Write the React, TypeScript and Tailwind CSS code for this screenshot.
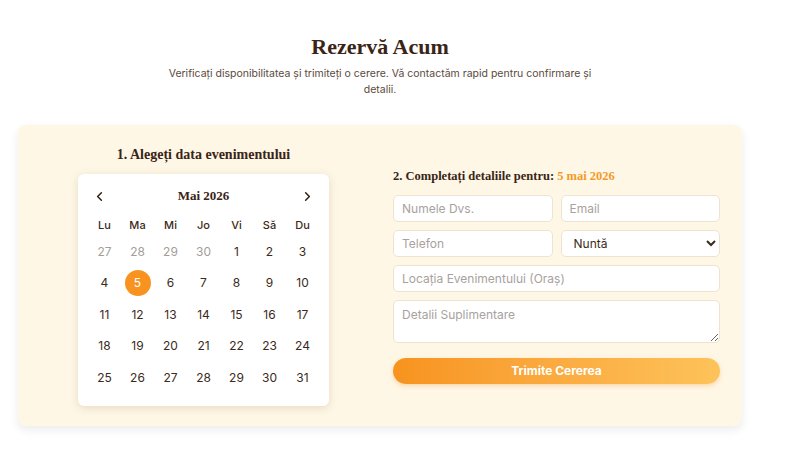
import React, { useState } from "react";
import { ChevronLeft, ChevronRight } from "lucide-react";

const weekDays = ["Lu", "Ma", "Mi", "Jo", "Vi", "Să", "Du"];

type Day = { n: number; muted: boolean };

const buildDays = (): Day[] => {
  const days: Day[] = [27, 28, 29, 30].map((n) => ({ n, muted: true }));
  for (let i = 1; i <= 31; i++) days.push({ n: i, muted: false });
  return days;
};

const serif = "font-['Liberation_Serif','DejaVu_Serif',serif]";

const Calendar: React.FC<{ selected: number; onSelect: (d: number) => void }> = ({
  selected,
  onSelect,
}) => {
  const days = buildDays();

  return (
    <div className="w-[251px] bg-white rounded-md shadow-[0_2px_8px_rgba(120,90,40,0.18)] px-[10px] pt-3 pb-3">
      {/* Header */}
      <div className="flex items-center justify-between h-5 px-[4px]">
        <button className="text-[#2d1f16]">
          <ChevronLeft size={15} strokeWidth={2.4} />
        </button>
        <span className={`${serif} font-bold text-[13px] text-[#3a2416]`}>Mai 2026</span>
        <button className="text-[#2d1f16]">
          <ChevronRight size={15} strokeWidth={2.4} />
        </button>
      </div>

      {/* Week days */}
      <div className="grid grid-cols-7 mt-2">
        {weekDays.map((d) => (
          <div
            key={d}
            className="h-[22px] flex items-center justify-center text-[11px] font-medium text-[#3b2a20]"
          >
            {d}
          </div>
        ))}
      </div>

      {/* Days */}
      <div className="grid grid-cols-7">
        {days.map((d, i) => {
          const isSel = !d.muted && d.n === selected;
          return (
            <div key={i} className="h-[31.5px] flex items-center justify-center">
              <button
                onClick={() => !d.muted && onSelect(d.n)}
                className={`w-[26px] h-[26px] rounded-full flex items-center justify-center text-[12px] ${
                  isSel
                    ? "bg-[#f7931e] text-white"
                    : d.muted
                    ? "text-[#a39d98]"
                    : "text-[#3b2a20]"
                }`}
              >
                {d.n}
              </button>
            </div>
          );
        })}
      </div>
    </div>
  );
};

const inputCls =
  "w-full h-[27px] rounded-[5px] border border-[#eee3d0] bg-white px-[8px] text-[12px] text-[#3b2a20] placeholder:text-[#a8a29e] outline-none";

export default function App() {
  const [selected, setSelected] = useState(5);

  return (
    <div className="w-[800px] h-[450px] bg-white font-['Inter','Liberation_Sans',sans-serif] overflow-hidden">
      <div className="w-[724px] ml-[18px] pt-8 flex flex-col items-center">
        <h1 className={`${serif} font-bold text-[22px] leading-[30px] text-[#3a2416]`}>
          Rezervă Acum
        </h1>
        <p className="mt-1 max-w-[440px] text-center text-[10.5px] leading-4 text-[#5b4a3c]">
          Verificați disponibilitatea și trimiteți o cerere. Vă contactăm rapid pentru confirmare
          și detalii.
        </p>

        <div className="mt-[27px] w-full bg-[#fef7e6] rounded-lg shadow-[0_4px_10px_rgba(0,0,0,0.08)] px-[22px] py-5 grid grid-cols-2 gap-[26px] items-center">
          {/* Left column */}
          <div className="flex flex-col items-center">
            <h2 className={`${serif} font-bold text-[14px] leading-5 text-[#3a2416] mb-[9px]`}>
              1. Alegeți data evenimentului
            </h2>
            <Calendar selected={selected} onSelect={setSelected} />
          </div>

          {/* Right column */}
          <div className="flex flex-col">
            <h2 className={`${serif} font-bold text-[12.5px] leading-[18px] text-[#3a2416] mb-[10px]`}>
              2. Completați detaliile pentru:{" "}
              <span className="text-[#f39a2b]">{selected} mai 2026</span>
            </h2>
            <div className="grid grid-cols-2 gap-2">
              <input className={inputCls} placeholder="Numele Dvs." />
              <input className={inputCls} placeholder="Email" />
              <input className={inputCls} placeholder="Telefon" />
              <select className={`${inputCls} px-[6px]`} defaultValue="Nuntă">
                <option>Nuntă</option>
                <option>Botez</option>
                <option>Aniversare</option>
                <option>Corporate</option>
              </select>
            </div>
            <input className={`${inputCls} mt-2`} placeholder="Locația Evenimentului (Oraș)" />
            <textarea
              className={`${inputCls} mt-2 h-[43px] py-[6px] leading-4`}
              placeholder="Detalii Suplimentare"
            />
            <button className="mt-[15px] h-[26px] rounded-full bg-gradient-to-r from-[#f7931e] to-[#fdc35a] text-white text-[12px] font-bold shadow-[0_2px_5px_rgba(247,147,30,0.3)]">
              Trimite Cererea
            </button>
          </div>
        </div>
      </div>
    </div>
  );
}
